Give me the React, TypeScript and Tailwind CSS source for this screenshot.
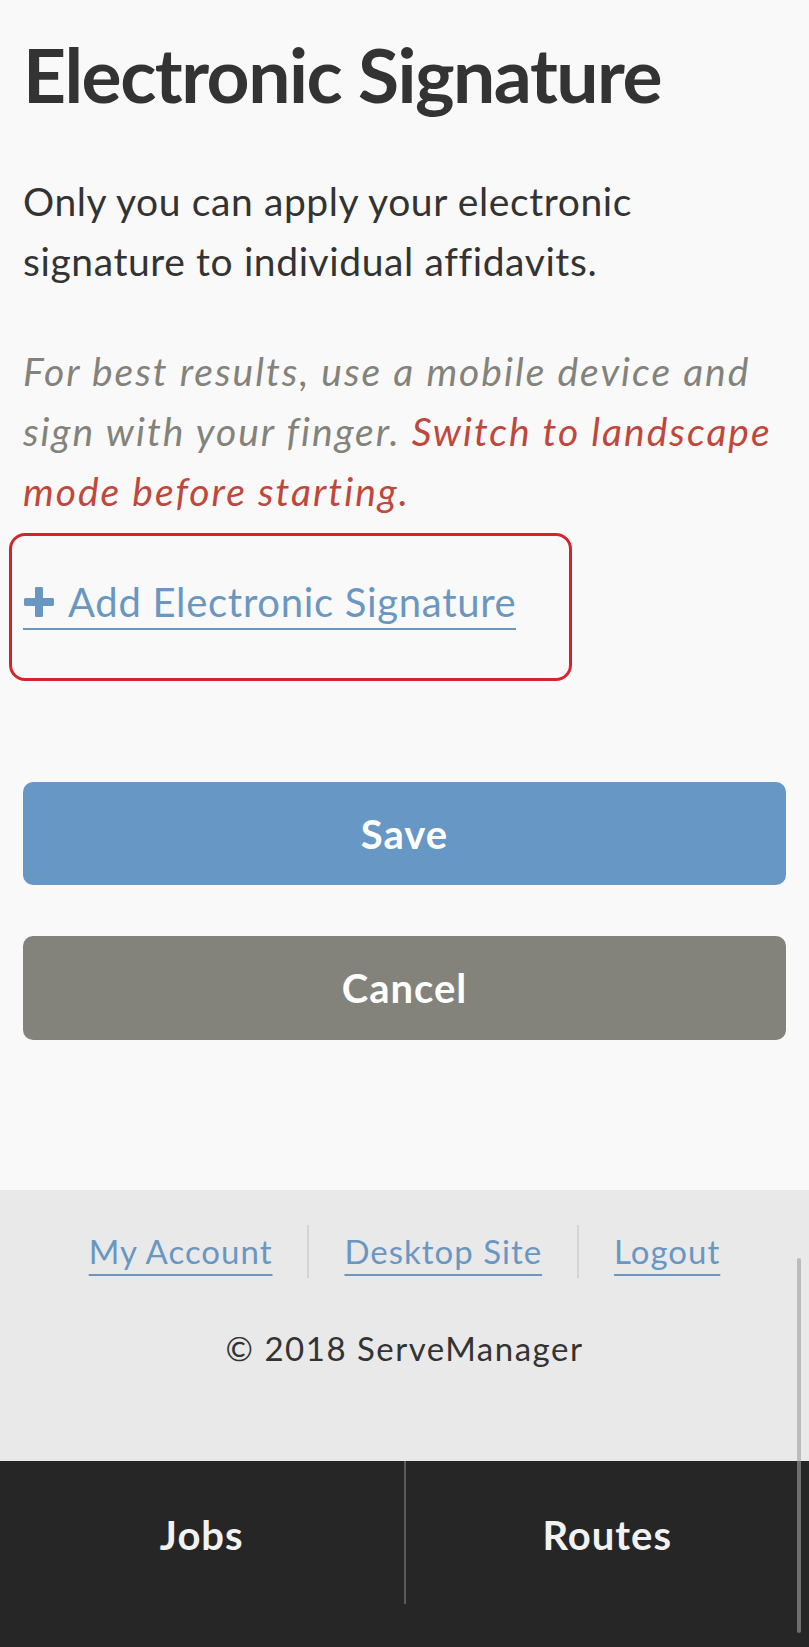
import React from 'react';

const font = "font-['Lato','Noto_Sans',sans-serif]";

const FooterLink: React.FC<{ label: string }> = ({ label }) => (
  <a href="#" className="text-[#6a97c1] underline decoration-2 underline-offset-[10px]">
    {label}
  </a>
);

const App: React.FC = () => {
  return (
    <div className={`${font} relative min-h-[1647px] bg-[#f9f9f9] flex flex-col`}>
      <main className="px-[23px] pt-[34px] pb-[150px]">
        <h1 className="text-[75px] leading-[80px] font-bold text-[#333333] tracking-[-1.5px]">
          Electronic Signature
        </h1>

        <p className="mt-[57px] text-[39px] leading-[60px] text-[#333333] tracking-[0.6px]">
          Only you can apply your electronic signature to individual affidavits.
        </p>

        <p className="mt-[50px] text-[39px] leading-[60px] italic text-[#83827b] tracking-[2px]">
          For best results, use a mobile device and sign with your finger.{' '}
          <span className="text-[#c0473b]">Switch to landscape mode before starting.</span>
        </p>

        <div className="mt-[12px] -ml-[14px] w-[563px] rounded-[16px] border-[3px] border-[#d8232e] pl-[11px] pt-[46px] pb-[48px]">
          <a
            href="#"
            className="inline-flex items-center gap-[13px] border-b-2 border-[#6a97c1] pb-[6px] text-[40px] leading-[40px] tracking-[0.7px] text-[#6a97c1]"
          >
            <svg width="32" height="32" viewBox="0 0 32 32" className="shrink-0">
              <path
                d="M12 2.5c0-1 .8-1.5 1.5-1.5h5c.7 0 1.5.5 1.5 1.5V12h9.5c1 0 1.5.8 1.5 1.5v5c0 .7-.5 1.5-1.5 1.5H20v9.5c0 1-.8 1.5-1.5 1.5h-5c-.7 0-1.5-.5-1.5-1.5V20H2.5C1.5 20 1 19.2 1 18.5v-5c0-.7.5-1.5 1.5-1.5H12z"
                fill="#6a97c1"
              />
            </svg>
            Add Electronic Signature
          </a>
        </div>

        <button className="mt-[101px] w-full h-[103px] rounded-[10px] bg-[#6797c4] text-white text-[40px] font-bold tracking-[1px]">
          Save
        </button>
        <button className="mt-[51px] w-full h-[104px] rounded-[10px] bg-[#83827b] text-white text-[40px] font-bold tracking-[1px]">
          Cancel
        </button>
      </main>

      <footer className="bg-[#e9e9e9] h-[271px] pt-[35px] text-[33px] tracking-[1px]">
        <div className="flex items-center justify-center">
          <FooterLink label="My Account" />
          <span className="mx-[35px] h-[53px] w-[2px] bg-[#d4d4d4]" />
          <FooterLink label="Desktop Site" />
          <span className="mx-[35px] h-[53px] w-[2px] bg-[#d4d4d4]" />
          <FooterLink label="Logout" />
        </div>
        <p className="mt-[46px] text-center text-[#333333] tracking-[1.5px]">© 2018 ServeManager</p>
      </footer>

      <nav className="flex-1 bg-[#262626] flex">
        <a href="#" className="flex-1 flex justify-center pt-[44px] text-[40px] font-bold tracking-[1px] text-[#f2f2f2]">
          Jobs
        </a>
        <div className="w-[2px] h-[143px] bg-[#5a5a5a]" />
        <a href="#" className="flex-1 flex justify-center pt-[44px] text-[40px] font-bold tracking-[1px] text-[#f2f2f2]">
          Routes
        </a>
      </nav>

      <div className="absolute right-[8px] top-[1258px] h-[375px] w-[4px] rounded-full bg-[#9e9e9e]/60" />
    </div>
  );
};

export default App;
